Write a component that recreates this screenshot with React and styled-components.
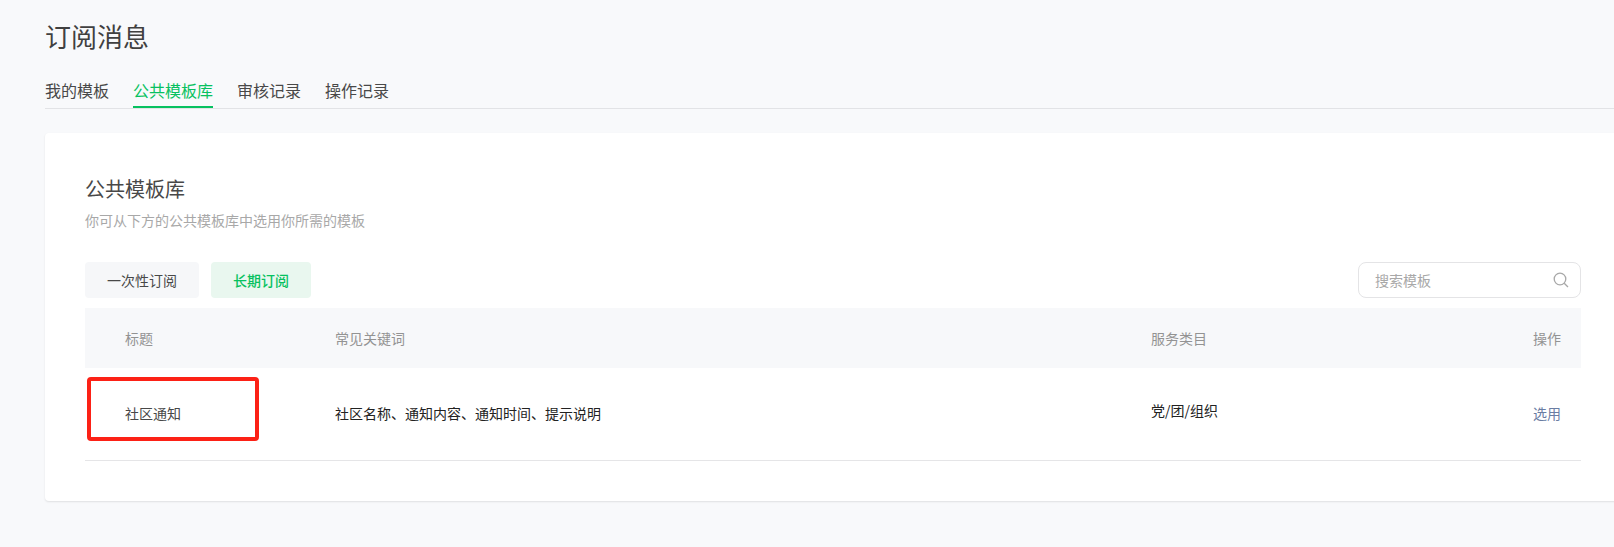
import React from "react";
import styled, { createGlobalStyle } from "styled-components";

const Global = createGlobalStyle`
  html, body { margin: 0; padding: 0; background: #f8f9fb; overflow: hidden; }
  body { font-family: "Noto Sans CJK SC", "Liberation Sans", sans-serif; color: #353535; }
`;

const Page = styled.div`
  width: 1614px;
  height: 547px;
  overflow: hidden;
  padding: 17px 0 0 45px;
  box-sizing: border-box;
`;

const Title = styled.h1`
  margin: 0;
  font-size: 26px;
  font-weight: 400;
  line-height: 38px;
  color: #404040;
`;

const Tabs = styled.nav`
  display: flex;
  gap: 24px;
  margin-top: 19px;
  height: 34px;
  border-bottom: 1px solid #e2e3e6;
`;

const Tab = styled.a`
  display: block;
  font-size: 16px;
  line-height: 32px;
  height: 34px;
  box-sizing: border-box;
  color: ${(p) => (p.$active ? "#07c160" : "#484848")};
  border-bottom: 2px solid ${(p) => (p.$active ? "#07c160" : "transparent")};
`;

const Card = styled.section`
  margin-top: 24px;
  width: 1576px;
  height: 368px;
  box-sizing: border-box;
  padding: 39px 40px 0;
  background: #fff;
  border-radius: 4px;
  box-shadow: 0 1px 2px rgba(0, 0, 0, 0.1);
`;

const CardTitle = styled.h2`
  margin: 0;
  font-size: 20px;
  font-weight: 400;
  line-height: 34px;
  color: #484848;
`;

const CardDesc = styled.p`
  margin: 0;
  font-size: 14px;
  line-height: 28px;
  color: #a8a8a8;
`;

const Toolbar = styled.div`
  display: flex;
  align-items: center;
  gap: 12px;
  margin-top: 28px;
`;

const Filter = styled.button`
  width: ${(p) => p.$width}px;
  height: 36px;
  padding: 0;
  border: 0;
  border-radius: 4px;
  font: ${(p) => (p.$active ? 500 : 400)} 14px/36px "Noto Sans CJK SC", sans-serif;
  color: ${(p) => (p.$active ? "#07c160" : "#484848")};
  background: ${(p) => (p.$active ? "#e9f7ef" : "#f6f7f9")};
`;

const Search = styled.div`
  margin-left: auto;
  width: 223px;
  height: 36px;
  box-sizing: border-box;
  display: flex;
  align-items: center;
  justify-content: space-between;
  padding: 0 11px 1px 16px;
  border: 1px solid #e4e4e6;
  border-radius: 8px;
  font-size: 14px;
  color: #a8a8a8;
`;

const Table = styled.div`
  margin-top: 10px;
  font-size: 14px;
`;

const Row = styled.div`
  display: grid;
  grid-template-columns: 210px 816px 1fr auto;
  align-items: center;
  padding: 0 20px 0 40px;
`;

const HeadRow = styled(Row)`
  height: 60px;
  background: #f7f8fa;
  color: #939393;
`;

const BodyRow = styled(Row)`
  height: 92px;
  box-sizing: content-box;
  padding-bottom: 0;
  border-bottom: 1px solid #e5e5e7;
  color: #222;
`;

const TitleCell = styled.div`
  position: relative;
  color: #484848;
  margin-top: -2px;
`;

const Keywords = styled.div`
  margin-top: -2px;
`;

const Category = styled.div`
  margin-top: -9px;
`;

const Action = styled.a`
  margin-top: -2px;
  color: #6a7da3;
`;

const Annotation = styled.span`
  position: absolute;
  left: -38px;
  top: -26px;
  width: 172px;
  height: 64px;
  box-sizing: border-box;
  border: 4px solid #fc2116;
  border-radius: 4px;
`;

const SearchIcon = () => (
  <svg width="16" height="16" viewBox="0 0 16 16" fill="none" stroke="#a8a8a8" strokeWidth="1.3">
    <circle cx="7" cy="7" r="5.8" />
    <path d="M11.2 11.2 15 15" />
  </svg>
);

export default function App() {
  return (
    <Page>
      <Global />
      <Title>订阅消息</Title>
      <Tabs>
        <Tab>我的模板</Tab>
        <Tab $active>公共模板库</Tab>
        <Tab>审核记录</Tab>
        <Tab>操作记录</Tab>
      </Tabs>
      <Card>
        <CardTitle>公共模板库</CardTitle>
        <CardDesc>你可从下方的公共模板库中选用你所需的模板</CardDesc>
        <Toolbar>
          <Filter $width={114}>一次性订阅</Filter>
          <Filter $width={100} $active>长期订阅</Filter>
          <Search>
            搜索模板
            <SearchIcon />
          </Search>
        </Toolbar>
        <Table>
          <HeadRow>
            <div>标题</div>
            <div>常见关键词</div>
            <div>服务类目</div>
            <div>操作</div>
          </HeadRow>
          <BodyRow>
            <TitleCell>
              社区通知
              <Annotation />
            </TitleCell>
            <Keywords>社区名称、通知内容、通知时间、提示说明</Keywords>
            <Category>党/团/组织</Category>
            <Action>选用</Action>
          </BodyRow>
        </Table>
      </Card>
    </Page>
  );
}
